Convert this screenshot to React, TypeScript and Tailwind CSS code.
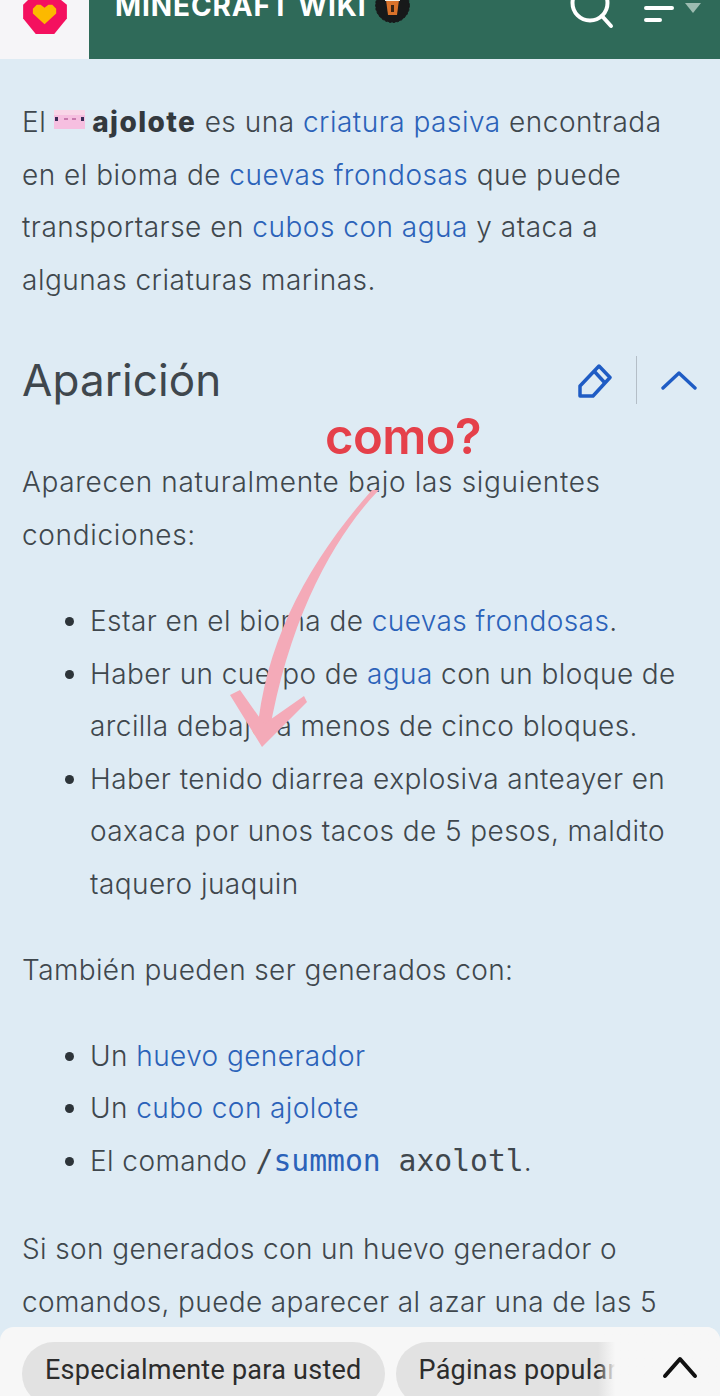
const Link = ({ children }: { children: React.ReactNode }) => (
  <a className="text-[#2b62b9]">{children}</a>
);

function Axolotl() {
  return (
    <svg width="31" height="19" viewBox="0 0 31 19" className="mr-[7px] ml-[8px] inline-block align-[3px]" shapeRendering="crispEdges">
      <rect x="0" y="0" width="31" height="19" fill="#f6bfe0" />
      <rect x="0" y="0" width="31" height="5" fill="#f9d6e8" />
      <rect x="1" y="7" width="3" height="4" fill="#3a2c58" />
      <rect x="27" y="7" width="3" height="4" fill="#3a2c58" />
      <rect x="10" y="8" width="4" height="2" fill="#c97aae" />
      <rect x="18" y="8" width="4" height="2" fill="#c97aae" />
    </svg>
  );
}

export default function App() {
  return (
    <div className="relative h-[1396px] w-[720px] overflow-hidden bg-[#deebf4] font-['Inter',sans-serif] text-[28px] leading-[52.5px] font-light tracking-[0.42px] text-[#3f474d]">
      <header className="flex h-[59px] bg-[#2f6a59]">
        <div className="flex w-[89px] justify-start bg-[#f6f5f8] pl-[23px]">
          <svg width="45" height="35" viewBox="0 0 46 36">
            <path d="M5 0H39L45 5V19L32 35H13L0 19V5Z" fill="#f4105f" />
            <path d="M22 25L10 14V9L14 5H18L22 8L26 5H30L34 9V14Z" fill="#fcb900" />
          </svg>
        </div>
        <div className="flex flex-1 items-start justify-between overflow-hidden pl-[26px]">
          <div className="-mt-[12px] flex items-center gap-[8px]">
            <span className="text-[28px] leading-[36px] font-bold tracking-[0.9px] text-white">MINECRAFT WIKI</span>
            <svg width="35" height="35" viewBox="0 0 35 35" className="-mt-[1px]">
              <circle cx="17.5" cy="17.5" r="17" fill="#17191a" stroke="#17191a" strokeWidth="1" strokeDasharray="2 2" />
              <path d="M11 12H24L22 27H13Z" fill="#d9722a" />
              <path d="M10 8H25V13H10Z" fill="#f3efe4" />
              <path d="M16 17H19V24H16Z" fill="#3a2414" />
            </svg>
          </div>
          <div className="flex items-start">
            <svg width="44" height="30" viewBox="0 0 44 30" className="mr-[30px]" fill="none" stroke="#ffffff" strokeWidth="4" strokeLinecap="round">
              <circle cx="20" cy="3" r="17.5" />
              <path d="M32 16L41 26" />
            </svg>
            <svg width="30" height="24" viewBox="0 0 30 24" className="mt-[2px] mr-[11px]" stroke="#ffffff" strokeWidth="4" strokeLinecap="round">
              <path d="M2 6H28M2 18H16" />
            </svg>
            <svg width="16" height="10" viewBox="0 0 16 10" className="mt-[3px] mr-[19px]">
              <path d="M0 0H16L8 10Z" fill="#9dbcb1" />
            </svg>
          </div>
        </div>
      </header>

      <main className="px-[22px] pt-[37px]">
        <p className="tracking-[0.5px]">
          El<Axolotl /><b className="font-extrabold tracking-[1.4px] text-[#33393e]">ajolote</b> es una <Link>criatura pasiva</Link> encontrada en el bioma de <Link>cuevas frondosas</Link> que puede transportarse en <Link>cubos con agua</Link> y ataca a algunas criaturas marinas.
        </p>

        <div className="mt-[42px] flex h-[64px] items-center justify-between">
          <h2 className="text-[44px] leading-[64px] font-normal tracking-[0.1px]">Aparición</h2>
          <div className="flex items-center">
            <svg width="36" height="36" viewBox="0 -1 36 36" fill="none" stroke="#1f5cc4" strokeWidth="3.5" strokeLinejoin="round">
              <path d="M4 23L23 3L34 14.5L17 33H4Z" />
              <path d="M18 8L29 20" />
            </svg>
            <div className="mx-[24px] h-[48px] w-[1px] bg-[#b4bec7]" />
            <svg width="36" height="20" viewBox="0 0 36 20" fill="none" stroke="#1f5cc4" strokeWidth="3.4" strokeLinecap="round" strokeLinejoin="round" className="mr-[1px]">
              <path d="M2 18L18 3L34 18" />
            </svg>
          </div>
        </div>

        <p className="mt-[44px] tracking-[0.66px]">Aparecen naturalmente bajo las siguientes condiciones:</p>

        <ul className="mt-[34px] list-disc pl-[68px] marker:text-[#2d3439]">
          <li>Estar en el bioma de <Link>cuevas frondosas</Link>.</li>
          <li>Haber un cuerpo de <Link>agua</Link> con un bloque de arcilla debajo a menos de cinco bloques.</li>
          <li>Haber tenido diarrea explosiva anteayer en oaxaca por unos tacos de 5 pesos, maldito taquero juaquin</li>
        </ul>

        <p className="mt-[34px] tracking-[0.38px]">También pueden ser generados con:</p>

        <ul className="mt-[33px] list-disc pl-[68px] marker:text-[#2d3439]">
          <li>Un <Link>huevo generador</Link></li>
          <li>Un <Link>cubo con ajolote</Link></li>
          <li>
            El comando <code className="font-['DejaVu_Sans_Mono',monospace] text-[29.7px] font-normal tracking-normal">/<Link>summon</Link> axolotl</code>.
          </li>
        </ul>

        <p className="mt-[36px] tracking-[0.38px]">Si son generados con un huevo generador o comandos, puede aparecer al azar una de las 5 variantes.</p>
      </main>

      <div className="absolute top-[407px] left-[325px] text-[49px] leading-[60px] font-semibold tracking-[-0.6px] text-[#e5404a]">como?</div>

      <svg className="absolute top-0 left-0" width="720" height="1396" viewBox="0 0 720 1396" fill="none">
        <path d="M379 490C340 530 290 610 269 735L257 735C265 640 310 560 372 490Z" fill="#f4aab8" />
        <path d="M230 695L240 690L264 724L304 696L307 702L262 747Z" fill="#f4aab8" />
      </svg>

      <div className="absolute right-0 bottom-0 left-0 flex h-[69px] items-start overflow-hidden rounded-t-[14px] bg-[#f7f7f7] pt-[15px] pl-[22px] font-['Roboto',sans-serif] text-[27px] leading-[56px] font-normal tracking-[0.25px] text-[#2c2c2c]">
        <div className="h-[64px] shrink-0 rounded-full bg-[#e2e2e2] px-[23px]">Especialmente para usted</div>
        <div className="ml-[11px] h-[64px] shrink-0 rounded-full bg-[#e2e2e2] px-[23px]">Páginas populares</div>
        <div className="absolute top-0 right-0 bottom-0 flex w-[122px] items-center justify-end bg-gradient-to-r from-transparent via-[#f7f7f7] via-[14%] to-[#f7f7f7] pr-[22px]">
          <svg width="36" height="24" viewBox="0 0 36 24" fill="none" stroke="#111111" strokeWidth="4" strokeLinecap="round" strokeLinejoin="round" className="mt-[10px]">
            <path d="M3 21L18 4L33 21" />
          </svg>
        </div>
      </div>
    </div>
  );
}
